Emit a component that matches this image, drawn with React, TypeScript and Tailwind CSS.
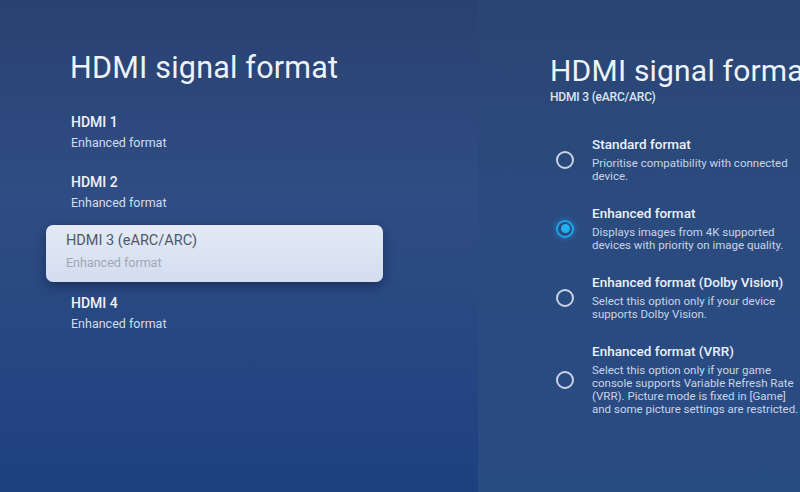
import React from "react";

const items = [
  { title: "HDMI 1", sub: "Enhanced format" },
  { title: "HDMI 2", sub: "Enhanced format" },
  { title: "HDMI 3 (eARC/ARC)", sub: "Enhanced format", selected: true },
  { title: "HDMI 4", sub: "Enhanced format" },
];

const options = [
  { title: "Standard format", desc: ["Prioritise compatibility with connected", "device."] },
  { title: "Enhanced format", desc: ["Displays images from 4K supported", "devices with priority on image quality."], selected: true },
  { title: "Enhanced format (Dolby Vision)", desc: ["Select this option only if your device", "supports Dolby Vision."] },
  {
    title: "Enhanced format (VRR)",
    desc: [
      "Select this option only if your game",
      "console supports Variable Refresh Rate",
      "(VRR). Picture mode is fixed in [Game]",
      "and some picture settings are restricted.",
    ],
  },
];

function Radio({ selected }: { selected?: boolean }) {
  if (selected) {
    return (
      <div className="w-[18px] h-[18px] rounded-full border-2 border-[#19a8ec] flex items-center justify-center shadow-[0_0_6px_rgba(40,180,255,0.5)]">
        <div className="w-[9px] h-[9px] rounded-full bg-[#22b0f0]" />
      </div>
    );
  }
  return <div className="w-[18px] h-[18px] rounded-full border-2 border-[#c9d3e4]" />;
}

export default function App() {
  return (
    <div
      className="w-[800px] h-[492px] flex overflow-hidden"
      style={{ fontFamily: "Roboto, 'Noto Sans', sans-serif" }}
    >
      <div className="w-[478px] h-full shrink-0 bg-[linear-gradient(180deg,#2a4170_0%,#2f4d84_40%,#264782_70%,#1f407f_100%)]">
        <div className="pt-[50px] pl-[70px]">
          <h1 className="text-[30.5px] leading-[36px] text-[#eef2f9] tracking-[0.2px]">HDMI signal format</h1>
        </div>
        <div className="mt-[16px] ml-[46px] w-[337px] flex flex-col">
          {items.map((it) =>
            it.selected ? (
              <div
                key={it.title}
                className="mt-[3px] mb-[1px] h-[57px] rounded-[7px] bg-[linear-gradient(180deg,#e3eaf5_0%,#d3ddef_100%)] shadow-[0_4px_12px_rgba(0,0,20,0.35)] px-[20px] pt-[7px] flex flex-col"
              >
                <div className="text-[14.5px] leading-[17px] text-[#4f5768]">{it.title}</div>
                <div className="mt-[6px] text-[12.5px] leading-[16px] text-[#a1a8b4]">{it.sub}</div>
              </div>
            ) : (
              <div key={it.title} className="h-[60px] px-[25px] flex flex-col justify-center">
                <div className="text-[14px] leading-[17px] font-medium text-[#eef2f9]">{it.title}</div>
                <div className="mt-[4px] text-[12.5px] leading-[16px] text-[#d3ddee]">{it.sub}</div>
              </div>
            )
          )}
        </div>
      </div>
      <div className="flex-1 h-full overflow-hidden bg-[linear-gradient(180deg,#2a4573_0%,#2b4b7f_45%,#294b84_100%)]">
        <div className="pt-[53px] pl-[72px] whitespace-nowrap">
          <h2 className="text-[30px] leading-[36px] text-[#eef2f9] tracking-[0.2px]">HDMI signal format</h2>
          <div className="mt-[1px] text-[12px] leading-[14px] font-medium text-[#dde5f2] tracking-[-0.2px]">HDMI 3 (eARC/ARC)</div>
          <div className="mt-[32px] flex flex-col gap-[22px]">
            {options.map((o) => (
              <div key={o.title} className="flex items-center">
                <div className="ml-[6px] mr-[18px] shrink-0">
                  <Radio selected={o.selected} />
                </div>
                <div className="flex flex-col">
                  <div className="text-[13.5px] leading-[16px] font-medium text-[#eaf0f8]">{o.title}</div>
                  <div className="mt-[5px] text-[11.5px] leading-[13px] text-[#c8d4e6]">
                    {o.desc.map((d) => (
                      <div key={d}>{d}</div>
                    ))}
                  </div>
                </div>
              </div>
            ))}
          </div>
        </div>
      </div>
    </div>
  );
}
